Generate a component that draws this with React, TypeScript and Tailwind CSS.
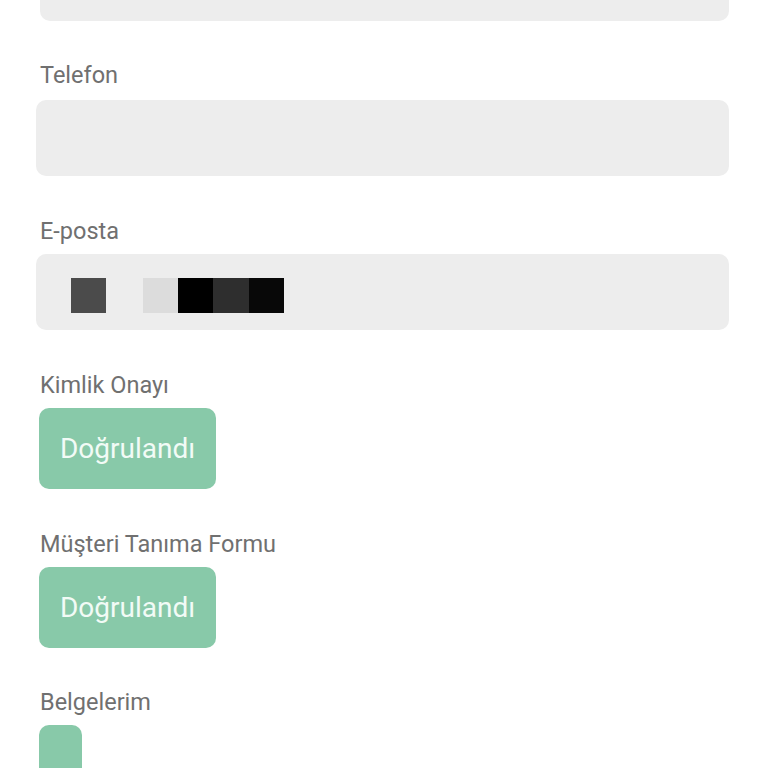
import React from "react";

const Label = ({ children }: { children: React.ReactNode }) => (
  <div className="pl-[4px] text-[23.5px] leading-[24px] text-[#707070]">{children}</div>
);

const Field = ({ children, className = "mt-[13px]" }: { children?: React.ReactNode; className?: string }) => (
  <div className={`${className} h-[76px] rounded-[10px] bg-[#ededed] flex items-center`}>{children}</div>
);

const Verified = () => (
  <div className="mt-[11px] ml-[3px] w-[177px] h-[81px] rounded-[10px] bg-[#88c9a9] flex items-center justify-center text-[28px] text-[#f2fbf6]">
    Doğrulandı
  </div>
);

export default function App() {
  return (
    <div
      className="w-[768px] h-[768px] overflow-hidden bg-white pl-[36px] pr-[39px]"
      style={{ fontFamily: "Roboto, 'Noto Sans', sans-serif" }}
    >
      <div className="-mt-[55px] h-[76px] rounded-[10px] bg-[#ededed] ml-[4px]" />

      <div className="mt-[42px]">
        <Label>Telefon</Label>
        <Field />
      </div>

      <div className="mt-[43px]">
        <Label>E-posta</Label>
        <Field className="mt-[11px]">
          <div className="ml-[35px] mt-[6px] flex">
            <div className="w-[35px] h-[35px] bg-[#4b4b4b]" />
            <div className="w-[37px] h-[35px] bg-[#ededed]" />
            <div className="w-[35px] h-[35px] bg-[#dcdcdc]" />
            <div className="w-[35px] h-[35px] bg-[#000000]" />
            <div className="w-[36px] h-[35px] bg-[#2e2e2e]" />
            <div className="w-[35px] h-[35px] bg-[#080808]" />
          </div>
        </Field>
      </div>

      <div className="mt-[43px]">
        <Label>Kimlik Onayı</Label>
        <Verified />
      </div>

      <div className="mt-[43px]">
        <Label>Müşteri Tanıma Formu</Label>
        <Verified />
      </div>

      <div className="mt-[42px]">
        <Label>Belgelerim</Label>
        <div className="mt-[11px] ml-[3px] w-[43px] h-[81px] rounded-[10px] bg-[#88c9a9]" />
      </div>
    </div>
  );
}
